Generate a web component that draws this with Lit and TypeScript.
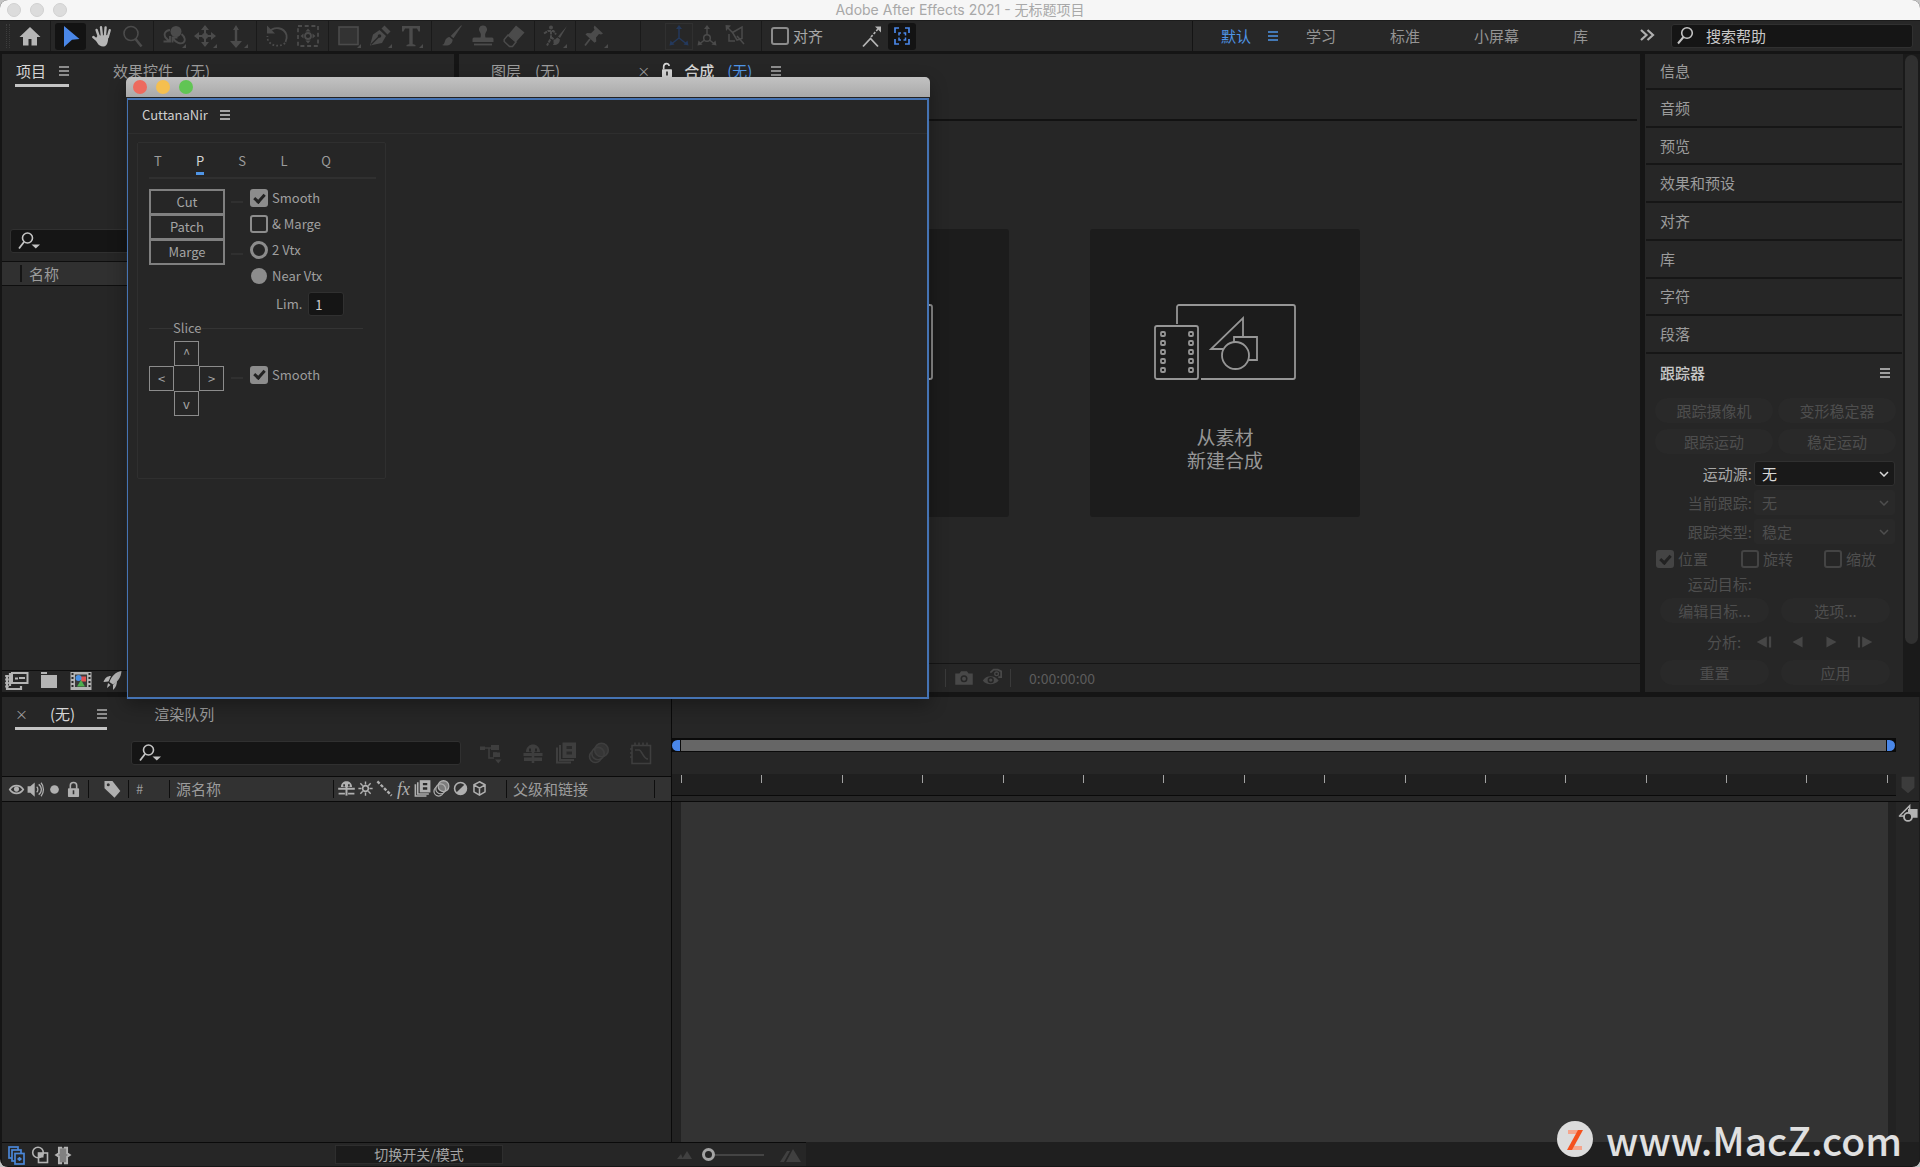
import { LitElement, html, svg, css, nothing } from "lit";
import { customElement, property } from "lit/decorators.js";

/* ---------- icons: all drawn on a 24 unit grid ---------- */
const corner = svg`<path d="M24 20v4h-4z" fill="currentColor"/>`;
const icons: Record<string, unknown> = {
  home: svg`<path d="M12 3l10.500 10H19v8.500h-5.500V15h-3v6.500H5V13H1.500z" fill="currentColor"/>`,
  select: svg`<path d="M5 2l15.500 13-7.500.8L5 23z" fill="currentColor"/>`,
  hand: svg`<g fill="none" stroke="currentColor" stroke-width="2.400" stroke-linecap="round"><path d="M9 13L6.600 6M11.800 11L11 3.200M15 11l.6-7.600M17.800 13l1.900-6.800M7.500 16.500L3.300 13"/></g><path d="M7.800 11.500l10.800-.5-.7 6c-.5 3.500-2 5.500-4.700 5.500-2.700 0-4.500-1.300-6-3.800l-2-3.700z" fill="currentColor"/>`,
  zoom: svg`<circle cx="10" cy="9.500" r="7" fill="none" stroke="currentColor" stroke-width="1.600"/><path d="M14.500 15l6 7.500" stroke="currentColor" stroke-width="2.600" fill="none"/>`,
  orbit: svg`<circle cx="14" cy="7.500" r="5.500" fill="currentColor"/><path d="M8 6c-5 .5-6.500 4-4.500 7.500M1.500 17.500h6.500v-5.500M3 13l4.500 4.500M11 14c2.500 5 8 6.500 10.500 4.500s1-6-2-8.500M10.500 18.500v-5h5" fill="none" stroke="currentColor" stroke-width="1.900"/>`,
  pan: svg`<path d="M12 4v16M4 12h16" stroke="currentColor" stroke-width="2"/><path d="M12 1l4 5H8zM12 23l4-5H8zM1 12l5-4v8zM23 12l-5-4v8z" fill="currentColor"/><circle cx="12" cy="12" r="3" fill="currentColor"/>`,
  dolly: svg`<path d="M12 4v15" stroke="currentColor" stroke-width="2.400"/><path d="M12 1l3 5H9zM12 24l6-7H6z" fill="currentColor"/>`,
  rotate: svg`<path d="M4 8c5-6 15-5 17.500 3 .8 3 0 5-1 7" fill="none" stroke="currentColor" stroke-width="1.800"/><path d="M20 19c-4 4-14 4-17-3-.6-1.500-.7-2.500-.5-4" fill="none" stroke="currentColor" stroke-width="1.800" stroke-dasharray="1.800 2"/><path d="M2 1.500v8h8z" fill="currentColor"/>`,
  anchor: svg`<rect x="2" y="2" width="20" height="20" fill="none" stroke="currentColor" stroke-width="1.800" stroke-dasharray="4 2.700"/><circle cx="12" cy="12" r="3" fill="none" stroke="currentColor" stroke-width="1.800"/><path d="M12 4.500l2.500 3h-5zM12 19.500l2.500-3h-5zM4.500 12l3-2.500v5zM19.500 12l-3-2.500v5z" fill="currentColor"/>`,
  rect: svg`<rect x="2" y="3" width="19" height="17.500" fill="#333" stroke="currentColor" stroke-width="1.600"/>`,
  pen: svg`<path d="M2 21.500l3-11 6.500-4.500 6.500 6-4 7z" fill="currentColor"/><path d="M13.500 4.500l3-3 6 6-3 3z" fill="currentColor"/><path d="M3 20.500l8-8" stroke="#262626" stroke-width="1.300"/><circle cx="11.500" cy="12" r="1.800" fill="#262626"/>`,
  type: svg`<path d="M3 2h18v5.500h-1.500L18 4.500h-4.300V20l2.800 1v1.200h-9V21l2.800-1V4.500H6L4.500 7.500H3z" fill="currentColor"/>`,
  brush: svg`<path d="M22 1.500l-8.500 12.800-2.800-2.300L21 1.500z" fill="currentColor"/><path d="M9.500 13l3.200 2.700c-.5 4.500-4.200 7-10.700 5.300 2-.5 2.300-1.800 3-4 .8-2.500 2.500-3.800 4.500-4z" fill="currentColor"/>`,
  stamp: svg`<path d="M12 1.500a4 4 0 0 1 3 6.800c-1.200 1.500-1 3.500-.5 5.200H21a1.500 1.500 0 0 1 1.500 1.500v3h-21v-3A1.500 1.500 0 0 1 3 13.500h6.500c.5-1.700.7-3.700-.5-5.200a4 4 0 0 1 3-6.800z" fill="currentColor"/><path d="M3 20.500h18" stroke="currentColor" stroke-width="1.800"/>`,
  eraser: svg`<path d="M14 1.500l8.500 7L14 18l-8-7z" fill="currentColor"/><path d="M6 11l8 7-3.500 4.500H7.500L2.200 17.500v-2z" fill="none" stroke="currentColor" stroke-width="1.500"/>`,
  roto: svg`<circle cx="8" cy="3.500" r="2" fill="currentColor"/><path d="M1 9.500l4-2.500h5.500l2.500 3.500M8 7v7l-4 7.500M8 13l3.500 3v5" fill="none" stroke="currentColor" stroke-width="2" stroke-dasharray="3.500 .8"/><path d="M24 2l-7 12-2-1.500zM14.500 13.500l2.500 2c-.5 4-3 6-7 5.500 1.500-1.500 1-6 4.500-7.500z" fill="currentColor"/>`,
  pin: svg`<path d="M10.500 1.500l8.500 8-2 1-2-.5-3 3.500.3 4-1.800 1.200L1.500 10.500 3 9l4 .2 3.500-3.500-.8-2z" fill="currentColor"/><path d="M6 15l-5 6.500" stroke="currentColor" stroke-width="1.800"/>`,
  axisLocal: svg`<path d="M12 3v11M12 14l-7 5.500M12 14l7 5.500" fill="none" stroke="currentColor" stroke-width="1.500"/><path d="M12 1l3 4H9zM2.500 21.500l1-5 4 4zM21.500 21.500l-1-5-4 4z" fill="currentColor"/>`,
  axisWorld: svg`<circle cx="12" cy="14" r="3.300" fill="none" stroke="currentColor" stroke-width="1.500"/><path d="M12 3v8M9.500 16L5 19.500M14.500 16l4.500 3.500" fill="none" stroke="currentColor" stroke-width="1.500"/><path d="M12 1l3 4H9zM2.500 21.500l1-5 4 4zM21.500 21.500l-1-5-4 4z" fill="currentColor"/>`,
  axisView: svg`<path d="M5 4l4.500 4.500M6 10v7h6M9.500 8.500L19 3v11.500l-5 1.500zM14 12l7 8" fill="none" stroke="currentColor" stroke-width="1.500"/><path d="M2.500 1l5.500.5L3 7z" fill="currentColor"/>`,
  snapEdge: svg`<path d="M4 22.500l7.500-8 7.500 8" fill="none" stroke="currentColor" stroke-width="1.800"/><path d="M12 13l7-8" stroke="currentColor" stroke-width="1.600" stroke-dasharray="2.500 1.500"/><path d="M16 2.500h6v6z" fill="currentColor"/>`,
  snapBox: svg`<path d="M5 9V4h4M15 4h4v5M5 15v5h4M15 20h4v-5" fill="none" stroke="currentColor" stroke-width="1.700"/><path d="M9 11.500V9h2M13.500 9h2v2.500M9 13.500V16h2M13.500 16h2v-2.500" fill="none" stroke="currentColor" stroke-width="1.500"/>`,
  more: svg`<path d="M6 6l5.500 5L6 16M12.500 6l5.500 5-5.500 5" fill="none" stroke="currentColor" stroke-width="2.200"/>`,
  glass: svg`<circle cx="14" cy="9" r="5.300" fill="none" stroke="currentColor" stroke-width="1.600"/><path d="M10.500 13L5 19.500" stroke="currentColor" stroke-width="2"/>`,
  glassDown: svg`<circle cx="10.500" cy="9" r="5" fill="none" stroke="currentColor" stroke-width="1.600"/><path d="M7 13l-5 6.500" stroke="currentColor" stroke-width="1.800"/><path d="M14.500 15.500h8.500l-4.200 4z" fill="currentColor"/>`,
  lockOpen: svg`<rect x="6" y="10" width="12" height="10" rx="1" fill="currentColor"/><path d="M8 10V7c0-5 6.500-5 6.500-1" fill="none" stroke="currentColor" stroke-width="2"/><path d="M12 12.500v5" stroke="#262626" stroke-width="2"/>`,
  lock: svg`<rect x="5" y="10.500" width="14" height="11" rx="1" fill="currentColor"/><path d="M8 11V7c0-5 8-5 8 0v4" fill="none" stroke="currentColor" stroke-width="2"/><path d="M12 13v5" stroke="#333" stroke-width="2"/>`,
  interpret: svg`<path d="M2 7v14h14v-3M5 5v13" fill="none" stroke="currentColor" stroke-width="2.200"/><path d="M2 7v14" stroke="currentColor" stroke-width="3.600" stroke-dasharray="2 1.500"/><rect x="7" y="5" width="15.500" height="10" fill="#262626" stroke="currentColor" stroke-width="2"/><path d="M10 10.500h3M14 10h6" stroke="currentColor" stroke-width="2"/>`,
  folder: svg`<path d="M4 4h6v2H4zM4 7h16v13H4z" fill="currentColor"/>`,
  comp: svg`<rect x="1.500" y="4" width="21" height="18" fill="currentColor"/><path d="M3.500 5v16M20.500 5v16" stroke="#262626" stroke-width="2" stroke-dasharray="2 2"/><rect x="6" y="6.500" width="12" height="12.500" fill="#3a3a3a"/><rect x="12" y="8.500" width="5" height="5" fill="#e05050"/><circle cx="9.500" cy="10" r="3" fill="#4a90e2"/><path d="M12 12l4 6.500H8z" fill="#4fae4f"/>`,
  rocket: svg`<path d="M20.500 3c-6 1-10 5-12 11l3.500 2.500c5-3 8-7 8.500-13.500z" fill="currentColor"/><path d="M10 8c-4 0-6 2-7.500 6l5-.5zM16 12.500c0 4-1 7-4 9.500v-5zM7 15l2.500 2-3.500 3z" fill="currentColor"/>`,
  camera: svg`<path d="M1.500 6.500h5L8.500 4h7l2 2.500h5V20h-21z" fill="currentColor"/><circle cx="12" cy="12.800" r="4.200" fill="#262626"/><circle cx="12" cy="12.800" r="2.400" fill="currentColor"/>`,
  snapshot: svg`<path d="M1 15c4-7 14-7 19 0-5 6-15 6-19 0z" fill="currentColor"/><circle cx="10.500" cy="14.500" r="3.800" fill="#262626"/><circle cx="10.500" cy="14.500" r="2" fill="currentColor"/><path d="M10 5.500L14 2h5l4 2v7h-3.500" fill="none" stroke="currentColor" stroke-width="2.200"/><circle cx="17.500" cy="7" r="2.200" fill="none" stroke="currentColor" stroke-width="1.600"/>`,
  flow: svg`<path d="M2 7h12M10 7v10h5M14 12h4" fill="none" stroke="currentColor" stroke-width="1.600"/><path d="M1 5.500h5v3.500H1zM12 4h8v5h-8zM14 11.500h7V16h-7zM16 18.500h6.500l-3.200 4z" fill="currentColor"/>`,
  shy: svg`<path d="M5 11c0-10 14-10 14 0M2.500 12h19v3h-19zM3 16.500h18V20H3z" fill="currentColor"/><path d="M9 7.500v3M15 7.500v3" stroke="#262626" stroke-width="2"/><path d="M12 9v13" stroke="currentColor" stroke-width="2.600"/>`,
  frames: svg`<path d="M3 6.500v15h14M6 4v15h14" fill="none" stroke="currentColor" stroke-width="2"/><rect x="8.500" y="1.500" width="13.500" height="15.500" fill="currentColor"/><path d="M12.500 5h5.500v3h-5.500zM12.500 10.500h5.500v3h-5.500z" fill="#2a2a2a"/>`,
  blur: svg`<g fill="#2c2c2c" stroke="currentColor" stroke-width="1.600"><circle cx="8.500" cy="15.500" r="6"/><circle cx="11" cy="12.500" r="6.200"/></g><circle cx="14.500" cy="9" r="6.800" fill="currentColor" fill-opacity=".6" stroke="currentColor" stroke-width="1.600"/>`,
  graph: svg`<rect x="3" y="4.500" width="18.500" height="18" fill="none" stroke="currentColor" stroke-width="1.600"/><path d="M6 9h4c3 0 4 9 9 9M6 1.500v3M10 1.500v3M14 1.500v3M18 1.500v3M1 8h2M1 12h2M1 16h2" fill="none" stroke="currentColor" stroke-width="1.600"/>`,
  eye: svg`<path d="M3.500 12c4-6.500 13-6.500 17 0-4 6.500-13 6.500-17 0z" fill="none" stroke="currentColor" stroke-width="2.200"/><circle cx="12" cy="11.500" r="3.200" fill="currentColor"/>`,
  speaker: svg`<path d="M2 8h3.500L11 3v18l-5.500-5H2z" fill="currentColor"/><path d="M13.500 8.500c2 1.500 2 5.500 0 7M16 5.500c4.500 3 4.500 10 0 13M19 3.500c4 4.500 4 12.500 0 17" fill="none" stroke="currentColor" stroke-width="1.600"/>`,
  dot: svg`<circle cx="12" cy="12" r="5.500" fill="currentColor"/>`,
  tag: svg`<path d="M3 2.500h9.500l9.500 12-7 8L3 11z" fill="currentColor"/><circle cx="7.500" cy="7" r="1.800" fill="#333"/>`,
  shySmall: svg`<path d="M5 10c0-9.500 14-9.500 14 0M1.500 11h21v2.500h-21zM2 17.500h8v2H2zM14 17.500h8v2h-8z" fill="currentColor"/><path d="M9 6.500v3M15 6.500v3" stroke="#333" stroke-width="2.200"/><path d="M12 9v12" stroke="currentColor" stroke-width="2.600"/>`,
  sun: svg`<circle cx="12" cy="12" r="3.600" fill="none" stroke="currentColor" stroke-width="2"/><path d="M12 3v4M12 17v4M3 12h4M17 12h4M5.500 5.500l3 3M15.500 15.500l3 3M18.500 5.500l-3 3M8.500 15.500l-3 3" stroke="currentColor" stroke-width="1.800"/>`,
  quality: svg`<path d="M3 3l18 18" stroke="currentColor" stroke-width="3" stroke-dasharray="4 2"/>`,
  half: svg`<circle cx="12" cy="12" r="7.500" fill="none" stroke="currentColor" stroke-width="2"/><path d="M17.500 6.500a7.700 7.700 0 0 1-11 11z" fill="currentColor"/>`,
  cube: svg`<path d="M12 3.500l7 3.800v9L12 20.500l-7-4.200v-9zM5 7.500l7 4 7-4M12 11.500v9" fill="none" stroke="currentColor" stroke-width="1.900"/>`,
  layers: svg`<g fill="#262626" stroke="currentColor" stroke-width="1.700"><rect x="5" y="4" width="9" height="11"/><rect x="8" y="7" width="9" height="11"/><rect x="11" y="10.500" width="9" height="10.500"/></g><path d="M13.500 16h4M15.500 14v4" stroke="currentColor" stroke-width="1.800"/>`,
  modes: svg`<rect x="10.500" y="10" width="9" height="9.500" fill="none" stroke="currentColor" stroke-width="1.600"/><circle cx="10" cy="9.500" r="5.300" fill="none" stroke="currentColor" stroke-width="1.600"/><path d="M10.500 10h5v4.500h-5z" fill="currentColor"/>`,
  braces: svg`<path d="M9 4h6v16H9z" fill="#808080"/><path d="M11 4H7.500v6l-3 2 3 2v7H11M13 4h3.500v6l3 2-3 2v7H13" fill="#808080" stroke="currentColor" stroke-width="2"/>`,
  hillSmall: svg`<path d="M5 16l4-5 2 5zM10 16l5-8 5 8z" fill="currentColor"/>`,
  hillBig: svg`<path d="M2 19L9 8h3L6 19zM8 19L15 6l8 13z" fill="currentColor"/>`,
  shapes: svg`<path d="M2 14L14 2v8" fill="none" stroke="currentColor" stroke-width="1.800"/><path d="M1 14.500h8" stroke="currentColor" stroke-width="1.800"/><rect x="12" y="6" width="11.500" height="10.500" fill="currentColor"/><circle cx="12" cy="15.500" r="4.800" fill="#262626" stroke="currentColor" stroke-width="2.200"/>`,
  marker: svg`<path d="M5 3h14v12l-7 6-7-6z" fill="currentColor"/>`,
  stepBack: svg`<path d="M3 12l11-6v12z" fill="currentColor"/><path d="M17.500 6v12" stroke="currentColor" stroke-width="2.400"/>`,
  playBack: svg`<path d="M6 12l11-6v12z" fill="currentColor"/>`,
  play: svg`<path d="M18 12L7 6v12z" fill="currentColor"/>`,
  stepFwd: svg`<path d="M21 12L10 6v12z" fill="currentColor"/><path d="M6.500 6v12" stroke="currentColor" stroke-width="2.400"/>`,
};

const icon = (name: string, size = 24, more = false) => html`<svg
  class="ico"
  viewBox="0 0 24 24"
  width=${size}
  height=${size}
  aria-hidden="true"
>${icons[name]}${more ? corner : nothing}</svg>`;

const burger = html`<svg class="burger" viewBox="0 0 10 10" width="10" height="10" aria-hidden="true">
  <path d="M0 1h10M0 5h10M0 9h10" stroke="currentColor" stroke-width="1.400" /></svg>`;

const shared = css`
  * {
    box-sizing: border-box;
  }
  :host {
    display: block;
    min-width: 0;
    min-height: 0;
    color: #9c9c9c;
    font: 15px/20px "Noto Sans CJK SC", sans-serif;
  }
  .ico,
  .burger {
    display: block;
    flex: none;
  }
  button,
  input,
  select {
    font: inherit;
    color: inherit;
    margin: 0;
    padding: 0;
    border: 0;
    background: none;
    border-radius: 0;
  }
  button {
    display: grid;
    place-items: center;
    white-space: nowrap;
  }
  .tabs {
    display: flex;
    align-items: stretch;
    height: 33px;
    white-space: nowrap;
  }
  .tab {
    display: flex;
    align-items: center;
    gap: 14px;
    padding-top: 3px;
    border-bottom: 3px solid transparent;
  }
  .tab.on {
    color: #d6d6d6;
    border-color: #c4c4c4;
  }
  .tab .burger {
    color: #b0b0b0;
  }
  .field {
    display: flex;
    flex: none;
    align-items: center;
    height: 24px;
    background: #151515;
    border: 1px solid #303030;
    border-radius: 3px;
    color: #c4c4c4;
  }
  .field input {
    flex: 1;
    min-width: 0;
    outline: 0;
  }
  .check {
    display: flex;
    align-items: center;
    gap: 4px;
    white-space: nowrap;
  }
  .check input {
    appearance: none;
    flex: none;
    display: grid;
    place-items: center;
    width: 18px;
    height: 18px;
    border: 2px solid currentColor;
    border-radius: 3px;
    color: #8c8c8c;
  }
  .check input[type="checkbox"]:checked {
    background: currentColor;
  }
  .check input[type="checkbox"]:checked::after {
    content: "";
    width: 4px;
    height: 8px;
    margin-bottom: 2px;
    border: solid #222;
    border-width: 0 3px 3px 0;
    transform: rotate(42deg);
  }
  .check input[type="radio"] {
    border-width: 3px;
    border-radius: 50%;
  }
  .check input[type="radio"]:checked {
    background: currentColor;
    background-clip: padding-box;
    border: 1px solid transparent;
  }
`;

/* ---------- top tool bar ---------- */
@customElement("tool-bar")
class ToolBar extends LitElement {
  static styles = [
    shared,
    css`
      .bar {
        display: flex;
        align-items: center;
        height: 34px;
        background: #272727;
        border-top: 1px solid #1c1c1c;
        border-bottom: 3px solid #151515;
        color: #4b4b4b;
      }
      .grip {
        width: 4px;
        height: 24px;
        margin: 0 4px 0 6px;
        border: dotted #3c3c3c;
        border-width: 0 1px;
      }
      .tool {
        width: 31px;
        height: 27px;
      }
      .tool.bright {
        color: #b6b6b6;
      }
      .tool.on {
        color: #4a87e8;
        background: #131313;
        border-radius: 3px;
      }
      .sep {
        flex: none;
        width: 10px;
        height: 30px;
        background: linear-gradient(#1a1a1a, #1a1a1a) center / 1px 100% no-repeat;
      }
      .axes {
        display: flex;
        align-items: center;
        margin-left: 24px;
      }
      .axes .tool {
        width: 28px;
      }
      .axes .sep + .tool {
        margin-left: 20px;
      }
      .axes .tool + .sep {
        margin-left: 7px;
      }
      .axes .dim {
        color: #24395c;
        border: 1px solid #303030;
      }
      .axes .check {
        color: #a8a8a8;
        margin: 0 34px 0 5px;
      }
      .axes .bright + .on {
        margin-left: 3px;
      }
      .spaces {
        display: flex;
        align-items: center;
        align-self: stretch;
        flex: none;
        width: 474px;
        margin-left: auto;
        padding: 0 7px 0 28px;
        border-left: 1px solid #141414;
        color: #949494;
        white-space: nowrap;
      }
      .spaces a {
        color: inherit;
        text-decoration: none;
        margin-right: 54px;
      }
      .spaces .now {
        color: #4f95e6;
        margin-right: 17px;
      }
      .spaces > .burger {
        color: #4f95e6;
        margin-right: 28px;
      }
      .spaces a:last-of-type {
        margin-right: 0;
      }
      .spaces button {
        margin-left: auto;
        color: #b0b0b0;
      }
      .help {
        width: 242px;
        margin: 0 7px 0 5px;
        padding-left: 1px;
        gap: 9px;
      }
      .help input::placeholder {
        color: #c8c8c8;
        opacity: 1;
      }
    `,
  ];

  private groups: [string, string, boolean?][][] = [
    [["home", "主页"]],
    [["select", "选取工具"], ["hand", "手形工具"], ["zoom", "缩放工具"]],
    [["orbit", "旋转摄像机", true], ["pan", "平移摄像机", true], ["dolly", "推拉摄像机", true]],
    [["rotate", "旋转工具"], ["anchor", "锚点工具"]],
    [["rect", "矩形工具", true], ["pen", "钢笔工具", true], ["type", "文字工具", true]],
    [["brush", "画笔工具"], ["stamp", "仿制图章"], ["eraser", "橡皮擦"]],
    [["roto", "Roto 笔刷", true]],
    [["pin", "人偶位置控点", true]],
  ];

  render() {
    const tone = (n: string) => (n === "select" ? "tool on" : n === "home" || n === "hand" ? "tool bright" : "tool");
    return html`<div class="bar">
      <span class="grip"></span>
      ${this.groups.map(
        (g, i) => html`${i ? html`<span class="sep"></span>` : nothing}${g.map(
          ([n, label, more]) => html`<button class=${tone(n)} aria-label=${label}>${icon(n, 24, more)}</button>`
        )}`
      )}
      <div class="axes">
        <span class="sep"></span>
        <button class="tool dim" aria-label="本地轴">${icon("axisLocal")}</button>
        <button class="tool" aria-label="世界轴">${icon("axisWorld")}</button>
        <button class="tool" aria-label="视图轴">${icon("axisView")}</button>
        <span class="sep"></span>
        <label class="check"><input type="checkbox" />对齐</label>
        <button class="tool bright" aria-label="对齐边缘">${icon("snapEdge")}</button>
        <button class="tool on" aria-label="对齐范围">${icon("snapBox")}</button>
      </div>
      <nav class="spaces">
        <a class="now" href="#default">默认</a>${burger}
        <a href="#learn">学习</a><a href="#standard">标准</a><a href="#small">小屏幕</a><a href="#library">库</a>
        <button aria-label="更多工作区">${icon("more")}</button>
      </nav>
      <div class="field help">${icon("glass")}<input type="search" aria-label="搜索帮助" placeholder="搜索帮助" /></div>
    </div>`;
  }
}

/* ---------- project panel ---------- */
@customElement("project-panel")
class ProjectPanel extends LitElement {
  static styles = [
    shared,
    css`
      :host {
        display: flex;
        flex-direction: column;
        background: #262626;
      }
      .tabs {
        padding-left: 13px;
        gap: 44px;
      }
      .tab.on {
        padding-left: 1px;
        gap: 13px;
      }
      .pair {
        gap: 12px;
      }
      .find {
        margin: 142px 8px 8px 8px;
        padding-left: 6px;
      }
      .cols {
        display: flex;
        align-items: center;
        height: 25px;
        padding-left: 18px;
        background: #303030;
        border: solid #0e0e0e;
        border-width: 1px 0;
      }
      .cols span {
        border-left: 2px solid #141414;
        padding-left: 7px;
        line-height: 17px;
      }
      .foot {
        display: flex;
        align-items: center;
        gap: 8px;
        height: 22px;
        margin-top: auto;
        padding: 0 0 4px 3px;
        border-top: 1px solid #0e0e0e;
        color: #b4b4b4;
      }
    `,
  ];
  render() {
    return html`<div class="tabs">
        <div class="tab on">项目 ${burger}</div>
        <div class="tab pair"><span>效果控件</span><span>(无)</span></div>
      </div>
      <div class="field find">${icon("glassDown")}<input type="search" aria-label="搜索项目" /></div>
      <div class="cols"><span>名称</span></div>
      <div class="foot">
        <button aria-label="解释素材">${icon("interpret")}</button>
        <button aria-label="新建文件夹">${icon("folder")}</button>
        <button aria-label="新建合成">${icon("comp")}</button>
        <button aria-label="项目设置">${icon("rocket")}</button>
      </div>`;
  }
}

/* ---------- composition viewer ---------- */
@customElement("comp-panel")
class CompPanel extends LitElement {
  static styles = [
    shared,
    css`
      :host {
        display: flex;
        flex-direction: column;
        background: #262626;
      }
      .tabs {
        padding-left: 32px;
        gap: 77px;
      }
      .tab {
        gap: 14px;
      }
      .tab.on {
        border-color: transparent;
        gap: 7px;
      }
      .tab.on b {
        font-weight: 500;
      }
      .blue {
        color: #4f95e6;
        margin: 0 12px 0 6px;
      }
      .x {
        color: #a0a0a0;
        font-size: 13px;
      }
      .stage {
        flex: 1;
        display: flex;
        justify-content: center;
        align-items: flex-start;
        gap: 81px;
        margin: 32px 3px 0 0;
        padding: 108px 0 0 3px;
        border-top: 2px solid #121212;
      }
      .card {
        display: flex;
        flex-direction: column;
        align-items: center;
        justify-content: flex-start;
        width: 270px;
        height: 288px;
        padding-top: 75px;
        gap: 45px;
        background: #1c1c1c;
        border-radius: 3px;
        color: #969696;
        font-size: 19px;
        line-height: 23px;
      }
      .foot {
        display: flex;
        align-items: center;
        height: 29px;
        gap: 4px;
        padding-left: 482px;
        border-top: 1px solid #151515;
        color: #484848;
      }
      .foot i {
        width: 1px;
        height: 18px;
        margin: 0 4px;
        background: #3a3a3a;
      }
      .foot output {
        margin-left: 10px;
        font-size: 14px;
        color: #5c5c5c;
      }
    `,
  ];
  render() {
    return html`<div class="tabs">
        <div class="tab"><span>图层</span><span>(无)</span></div>
        <div class="tab on"><span class="x">×</span>${icon("lockOpen", 20)}<b>合成</b><span class="blue">(无)</span>${burger}</div>
      </div>
      <div class="stage">
        <button class="card" aria-label="新建合成">
          <svg width="118" height="76" viewBox="0 0 118 76" fill="none" stroke="currentColor" stroke-width="1.800">
            <rect x="1" y="1" width="116" height="74" rx="2" />
          </svg>
        </button>
        <button class="card">
          <svg width="144" height="76" viewBox="0 0 144 76" fill="none" stroke="currentColor" stroke-width="1.800">
            <path d="M24 20V3a2 2 0 0 1 2-2h114a2 2 0 0 1 2 2v70a2 2 0 0 1-2 2H48" />
            <rect x="2" y="22" width="43" height="53" rx="2" />
            ${[28, 37, 46, 55, 64].map((y) => svg`<rect x="8" y=${y} width="4" height="4" rx="1"/><rect x="36" y=${y} width="4" height="4" rx="1"/>`)}
            <path d="M70 45H58L90 14v19M81 38v-5h23v23h-8" />
            <circle cx="82.500" cy="51.500" r="13.500" />
          </svg>
          <span>从素材<br />新建合成</span>
        </button>
      </div>
      <div class="foot">
        <i></i>${icon("camera", 20)}<span></span>${icon("snapshot", 20)}<i></i><output>0:00:00:00</output>
      </div>`;
  }
}

/* ---------- right column ---------- */
@customElement("side-stack")
class SideStack extends LitElement {
  static styles = [
    shared,
    css`
      :host {
        display: grid;
        grid-template-columns: 1fr 17px;
        background: #262626;
      }
      .rail {
        background: #1a1a1a;
        padding: 1px 2px 48px;
      }
      .rail div {
        height: 100%;
        background: #303030;
        border-radius: 7px;
      }
      .heads {
        display: grid;
        grid-template-rows: 36px repeat(7, 1fr);
        height: 300px;
        padding: 0 1px;
      }
      .heads button {
        justify-items: start;
        padding-left: 14px;
        border-bottom: 2px solid #161616;
      }
      .title {
        display: flex;
        align-items: center;
        justify-content: space-between;
        height: 38px;
        padding: 0 13px 0 15px;
        color: #c8c8c8;
        font-weight: 500;
      }
      form {
        color: #4e4e4e;
      }
      .duo {
        display: grid;
        grid-template-columns: 1fr 1fr;
        gap: 6px 5px;
        padding: 6px 7px 5px 10px;
      }
      .duo.slim {
        gap: 6px 12px;
        padding: 0 13px 0 15px;
      }
      .duo button {
        height: 25px;
        border-radius: 13px;
        background: #292929;
      }
      .row {
        display: grid;
        grid-template-columns: 107px 141px;
        gap: 2px;
        align-items: center;
        height: 29px;
      }
      .row > label,
      .target {
        text-align: right;
      }
      .row > label {
        white-space: nowrap;
      }
      .target {
        width: 107px;
        height: 26px;
        line-height: 23px;
      }
      .pick {
        display: grid;
        grid-template-columns: 1fr 24px;
        align-items: center;
      }
      .pick select {
        grid-area: 1 / 1 / 2 / 3;
        appearance: none;
        height: 25px;
        padding-left: 7px;
        opacity: 1;
        background: #292929;
        border: 1px solid #292929;
        border-radius: 3px;
      }
      .pick svg {
        grid-area: 1 / 2;
        justify-self: end;
        margin-right: 6px;
        pointer-events: none;
      }
      .live > label {
        color: #a6a6a6;
      }
      .live .pick {
        color: #d8d8d8;
      }
      .live select {
        background: #191919;
        border-color: #303030;
      }
      .ticks {
        display: grid;
        grid-template-columns: 85px 83px 1fr;
        height: 26px;
        padding-left: 11px;
      }
      .ticks .check input {
        color: #444;
      }
      .play {
        display: flex;
        align-items: center;
        height: 37px;
        padding-left: 62px;
      }
      .play span {
        width: 41px;
      }
      .play button {
        width: 33px;
        color: #464646;
      }
    `,
  ];

  private pick(id: string, label: string, value: string, live = false) {
    return html`<div class="row ${live ? "live" : ""}">
      <label for=${id}>${label}</label>
      <div class="pick">
        <select id=${id} ?disabled=${!live}><option>${value}</option></select>
        <svg width="10" height="6" viewBox="0 0 10 6"><path d="M1 1l4 4 4-4" fill="none" stroke="currentColor" stroke-width="1.500" /></svg>
      </div>
    </div>`;
  }

  render() {
    const heads = ["信息", "音频", "预览", "效果和预设", "对齐", "库", "字符", "段落"];
    return html`<section>
        <div class="heads">${heads.map((h) => html`<button>${h}</button>`)}</div>
        <div class="title"><span>跟踪器</span>${burger}</div>
        <form>
          <div class="duo">
            <button type="button" disabled>跟踪摄像机</button><button type="button" disabled>变形稳定器</button>
            <button type="button" disabled>跟踪运动</button><button type="button" disabled>稳定运动</button>
          </div>
          ${this.pick("source", "运动源:", "无", true)}
          ${this.pick("current", "当前跟踪:", "无")}
          ${this.pick("kind", "跟踪类型:", "稳定")}
          <div class="ticks">
            <label class="check"><input type="checkbox" checked disabled />位置</label>
            <label class="check"><input type="checkbox" disabled />旋转</label>
            <label class="check"><input type="checkbox" disabled />缩放</label>
          </div>
          <div class="target">运动目标:</div>
          <div class="duo slim">
            <button type="button" disabled>编辑目标...</button><button type="button" disabled>选项...</button>
          </div>
          <div class="play">
            <span>分析:</span>
            <button type="button" aria-label="向后分析一帧">${icon("stepBack", 22)}</button>
            <button type="button" aria-label="向后分析">${icon("playBack", 22)}</button>
            <button type="button" aria-label="向前分析">${icon("play", 22)}</button>
            <button type="button" aria-label="向前分析一帧">${icon("stepFwd", 22)}</button>
          </div>
          <div class="duo slim">
            <button type="button" disabled>重置</button><button type="button" disabled>应用</button>
          </div>
        </form>
      </section>
      <div class="rail"><div></div></div>`;
  }
}

/* ---------- timeline ---------- */
@customElement("time-line")
class TimeLine extends LitElement {
  static styles = [
    shared,
    css`
      :host {
        display: grid;
        grid-template-rows: auto auto auto 1fr auto;
        grid-template-columns: 670px minmax(0, 1fr) 23px;
        background: #262626;
      }
      .left {
        grid-column: 1;
        grid-row: 1 / 5;
        display: flex;
        flex-direction: column;
        border-right: 1px solid #0a0a0a;
      }
      .tabs {
        padding-left: 13px;
        gap: 47px;
      }
      .tab.on {
        gap: 22px;
      }
      .x {
        font-size: 13px;
        color: #a0a0a0;
      }
      .tools {
        display: flex;
        align-items: center;
        height: 46px;
        padding-left: 129px;
        color: #3e3e3e;
      }
      .tools .field {
        width: 330px;
        padding-left: 6px;
        margin-right: 18px;
      }
      .tools > .ico {
        margin-right: 9px;
      }
      .tools .far {
        margin-right: 18px;
      }
      .cols {
        display: flex;
        align-items: center;
        height: 26px;
        padding-left: 5px;
        background: #323232;
        border: solid #0a0a0a;
        border-width: 1px 0;
        color: #b0b0b0;
        white-space: nowrap;
      }
      .cols .txt {
        color: #9c9c9c;
      }
      .cols i {
        flex: none;
        width: 1px;
        height: 18px;
        background: #0e0e0e;
      }
      .av,
      .sw {
        display: flex;
        flex: none;
      }
      .av {
        width: 81px;
      }
      .sw {
        width: 172px;
        padding-left: 3px;
      }
      .lab {
        width: 39px;
        padding-left: 13px;
      }
      .num {
        width: 40px;
        padding-left: 7px;
        font-size: 13px;
      }
      .name {
        width: 163px;
        padding-left: 6px;
      }
      .parent {
        width: 147px;
        padding-left: 6px;
      }
      .fx {
        width: 19px;
        text-align: center;
        font-style: italic;
        font-family: "Liberation Serif", serif;
        font-size: 18px;
      }
      .work {
        grid-column: 2;
        grid-row: 1;
        display: flex;
        gap: 1px;
        height: 14px;
        margin: 41px 0 0;
        background: #0a0a0a;
        padding: 2px 1px 1px 0;
      }
      .work div {
        flex: 1;
        background: #666;
      }
      .work b {
        width: 8px;
        background: #4a87e8;
        border-radius: 6px 0 0 6px;
      }
      .work b:last-child {
        border-radius: 0 6px 6px 0;
      }
      .ruler {
        grid-column: 2;
        grid-row: 2;
        display: flex;
        justify-content: space-between;
        align-items: flex-start;
        height: 44px;
        padding: 23px 8px 0 9px;
        background: linear-gradient(#262626 22px, #1f1f1f 22px);
        border-bottom: 1px solid #0a0a0a;
      }
      .ruler i {
        width: 1px;
        height: 8px;
        background: #a2a2a2;
      }
      .gap {
        grid-column: 2 / 4;
        grid-row: 3;
        height: 6px;
        border-bottom: 1px solid #0a0a0a;
      }
      .tracks {
        grid-column: 2;
        grid-row: 4;
        background: #333;
        border: solid #222;
        border-width: 0 8px 0 9px;
      }
      .side {
        grid-column: 3;
        grid-row: 1 / 3;
        place-self: end center;
        color: #3c3c3c;
      }
      .shapes {
        grid-column: 3;
        grid-row: 4;
        justify-self: center;
        margin-top: 2px;
        color: #b4b4b4;
      }
      .foot {
        grid-column: 1 / 4;
        grid-row: 5;
        display: flex;
        background: #1f1f1f;
      }
      .bar {
        display: flex;
        align-items: center;
        width: 804px;
        height: 24px;
        padding: 0 4px 0 2px;
        background: #262626;
        border-top: 1px solid #0a0a0a;
        color: #b4b4b4;
      }
      .switch {
        width: 168px;
        height: 19px;
        margin: 0 169px 0 auto;
        background: #1b1b1b;
        border: 1px solid #2e2e2e;
        color: #a4a4a4;
        font-size: 14px;
        line-height: 17px;
      }
      .on {
        color: #4a87d8;
      }
      .dark {
        color: #404040;
      }
      .slide {
        appearance: none;
        width: 62px;
        height: 16px;
        margin: 0 14px 0 6px;
        background: linear-gradient(#444, #444) 12px center / 50px 2px no-repeat;
      }
      .slide::-webkit-slider-thumb {
        appearance: none;
        width: 13px;
        height: 13px;
        border: 3px solid #a4a4a4;
        border-radius: 50%;
        background: #262626;
      }
    `,
  ];
  render() {
    return html`<div class="left">
        <div class="tabs">
          <div class="tab on"><span class="x">×</span><span>(无)</span>${burger}</div>
          <div class="tab">渲染队列</div>
        </div>
        <div class="tools">
          <div class="field">${icon("glassDown")}<input type="search" aria-label="搜索图层" /></div>
          <span class="far">${icon("flow")}</span>${icon("shy")}${icon("frames")}<span class="far">${icon("blur")}</span>${icon("graph")}
        </div>
        <div class="cols">
          <span class="av">${["eye", "speaker", "dot", "lock"].map((n) => icon(n, 19))}</span><i></i>
          <span class="lab">${icon("tag", 20)}</span><i></i>
          <span class="num txt">#</span><i></i>
          <span class="name txt">源名称</span><i></i>
          <span class="sw">${["shySmall", "sun", "quality"].map((n) => icon(n, 19))}<span class="fx">fx</span>${["frames", "blur"].map((n) => icon(n, 19))}${["half", "cube"].map((n) => icon(n, 19))}</span><i></i>
          <span class="parent txt">父级和链接</span><i></i>
        </div>
      </div>
      <div class="work"><b></b><div></div><b></b></div>
      <div class="ruler">${Array.from({ length: 16 }, () => html`<i></i>`)}</div>
      <div class="gap"></div>
      <div class="tracks"></div>
      <div class="side">${icon("marker", 22)}</div>
      <div class="shapes">${icon("shapes", 20)}</div>
      <div class="foot">
        <div class="bar">
          <button class="on" aria-label="展开图层开关">${icon("layers")}</button>
          <button aria-label="展开转换控制">${icon("modes")}</button>
          <button aria-label="展开入点出点">${icon("braces", 22)}</button>
          <button class="switch">切换开关/模式</button>
          <span class="dark">${icon("hillSmall")}</span>
          <input class="slide" type="range" min="0" max="100" value="0" aria-label="缩放时间" />
          <span class="dark">${icon("hillBig")}</span>
        </div>
      </div>`;
  }
}

/* ---------- floating script window ---------- */
@customElement("script-window")
class ScriptWindow extends LitElement {
  @property() heading = "CuttanaNir";

  static styles = [
    shared,
    css`
      :host {
        display: flex;
        flex-direction: column;
        border-radius: 5px 5px 0 0;
        box-shadow: 0 6px 18px #0005;
        font-size: 13px;
      }
      .chrome {
        display: flex;
        align-items: center;
        gap: 9px;
        height: 21px;
        padding-left: 7px;
        background: linear-gradient(#c2c2c2, #a9a9a9);
        border-bottom: 1px solid #222;
        border-radius: 5px 5px 0 0;
      }
      .light {
        width: 14px;
        height: 14px;
        border-radius: 50%;
        background: #ed6a5e;
      }
      .light.min {
        background: #f5bf4f;
      }
      .light.max {
        background: #61c554;
      }
      .body {
        flex: 1;
        margin: 0 1px;
        background: #262626;
        border: 2px solid #4573b3;
        border-left-width: 1px;
      }
      .name {
        display: flex;
        align-items: center;
        gap: 12px;
        height: 34px;
        padding: 0 0 3px 14px;
        border-bottom: 1px solid #2e2e2e;
        color: #cfcfcf;
      }
      .box {
        width: 249px;
        height: 337px;
        margin: 8px 9px;
        padding: 8px 9px 0 11px;
        border: 1px solid #2f2f2f;
        border-radius: 2px;
      }
      .modes {
        display: flex;
        gap: 24px;
        height: 28px;
        border-bottom: 2px solid #303030;
      }
      .modes button {
        width: 18px;
        height: 24px;
        padding-bottom: 3px;
        border-bottom: 3px solid transparent;
        background: none;
      }
      .modes .on {
        color: #d4d4d4;
        background: linear-gradient(#4f95e6, #4f95e6) center bottom / 8px 3px no-repeat border-box;
      }
      .cut {
        display: grid;
        grid-template-columns: 76px 1fr;
        gap: 25px;
        padding-top: 10px;
      }
      .acts {
        display: flex;
        flex-direction: column;
      }
      .acts button {
        height: 26px;
        border: 2px solid #808080;
        color: #a4a4a4;
        margin-bottom: -1px;
      }
      .opts {
        display: flex;
        flex-direction: column;
        gap: 8px;
        color: #a0a0a0;
      }
      .opts .check {
        height: 18px;
      }
      .lim {
        display: flex;
        align-items: center;
        gap: 6px;
        height: 22px;
        margin-left: 26px;
      }
      .lim input {
        width: 36px;
        height: 24px;
        padding-left: 6px;
        background: #151515;
        border: 1px solid #303030;
        border-radius: 3px;
        color: #d0d0d0;
      }
      .rule {
        display: flex;
        align-items: center;
        height: 20px;
        margin: 3px 13px 3px 0;
      }
      .rule::before,
      .rule::after {
        content: "";
        width: 24px;
        height: 1px;
        background: #343434;
      }
      .rule::after {
        flex: 1;
      }
      .slice {
        display: grid;
        grid-template-columns: 76px 1fr;
        gap: 25px;
        align-items: center;
      }
      .slice .check {
        padding-bottom: 8px;
      }
      .pad {
        display: grid;
        grid-template-columns: repeat(3, 25px);
        grid-template-rows: repeat(3, 25px);
      }
      .pad button {
        border: 1px solid #8c8c8c;
        color: #a4a4a4;
      }
      .up {
        grid-area: 1 / 2;
      }
      .lt {
        grid-area: 2 / 1;
      }
      .rt {
        grid-area: 2 / 3;
      }
      .dn {
        grid-area: 3 / 2;
      }
      .hint {
        position: relative;
      }
      .hint::before {
        content: "";
        position: absolute;
        left: -19px;
        top: 12px;
        width: 12px;
        height: 2px;
        background: #303030;
      }
    `,
  ];
  render() {
    return html`<div class="chrome"><span class="light"></span><span class="light min"></span><span class="light max"></span></div>
      <div class="body">
        <div class="name"><span>${this.heading}</span>${burger}</div>
        <div class="box">
          <div class="modes">
            ${["T", "P", "S", "L", "Q"].map((m) => html`<button class=${m === "P" ? "on" : ""}>${m}</button>`)}
          </div>
          <div class="cut">
            <div class="acts"><button>Cut</button><button>Patch</button><button>Marge</button></div>
            <div class="opts">
              <label class="check hint"><input type="checkbox" checked />Smooth</label>
              <label class="check"><input type="checkbox" />&amp; Marge</label>
              <label class="check hint"><input type="radio" name="vtx" />2 Vtx</label>
              <label class="check"><input type="radio" name="vtx" checked />Near Vtx</label>
              <label class="lim">Lim.<input type="text" value="1" /></label>
            </div>
          </div>
          <div class="rule">Slice</div>
          <div class="slice">
            <div class="pad">
              <button class="up">^</button><button class="lt">&lt;</button><button class="rt">&gt;</button><button class="dn">v</button>
            </div>
            <label class="check hint"><input type="checkbox" checked />Smooth</label>
          </div>
        </div>
      </div>`;
  }
}

/* ---------- page ---------- */
@customElement("app-root")
class AppRoot extends LitElement {
  static styles = [
    shared,
    css`
      :host {
        background: #c4c4c4;
      }
      .app {
        position: relative;
        display: grid;
        grid-template-rows: 20px 34px minmax(638px, 638fr) minmax(300px, 475fr);
        min-height: 100vh;
        background: #151515;
        border-radius: 8px;
        overflow: hidden;
      }
      .title {
        display: grid;
        grid-template-columns: 1fr auto 1fr;
        align-items: center;
        background: #f6f6f6;
        color: #a8a8a8;
        font: 14px/20px Inter, "Noto Sans CJK SC", sans-serif;
      }
      .lights {
        display: flex;
        gap: 9px;
        padding-left: 7px;
      }
      .lights span {
        width: 14px;
        height: 14px;
        border-radius: 50%;
        background: #dcdcdc;
        border: 1px solid #d0d0d0;
      }
      .work {
        display: grid;
        grid-template-columns: 452px minmax(0, 1fr) 275px;
        gap: 5px;
        padding-left: 2px;
      }
      time-line {
        margin: 5px 0 1px 2px;
        border-right: 1px solid #1c1c1c;
      }
      script-window {
        position: absolute;
        left: 126px;
        top: 77px;
        width: 804px;
        height: 622px;
      }
      .mark {
        position: absolute;
        right: 18px;
        bottom: 8px;
        display: flex;
        align-items: center;
        gap: 13px;
        color: #e0e0e0;
        font-size: 39px;
        line-height: 40px;
        font-weight: 500;
      }
    `,
  ];
  render() {
    return html`<div class="app">
      <header class="title">
        <div class="lights"><span></span><span></span><span></span></div>
        <span>Adobe After Effects 2021 - 无标题项目</span>
      </header>
      <tool-bar></tool-bar>
      <div class="work"><project-panel></project-panel><comp-panel></comp-panel><side-stack></side-stack></div>
      <time-line></time-line>
      <script-window></script-window>
      <div class="mark">
        <svg width="36" height="36" viewBox="0 0 36 36" aria-hidden="true">
          <circle cx="18" cy="18" r="18" fill="#dcdcdc" />
          <path d="M11 9h13v4H11zM12 25h13v4H12z" fill="#f5a58c" />
          <path d="M21 9h5l-11 20h-5z" fill="#f4511e" />
        </svg>
        <span>www.MacZ.com</span>
      </div>
    </div>`;
  }
}
